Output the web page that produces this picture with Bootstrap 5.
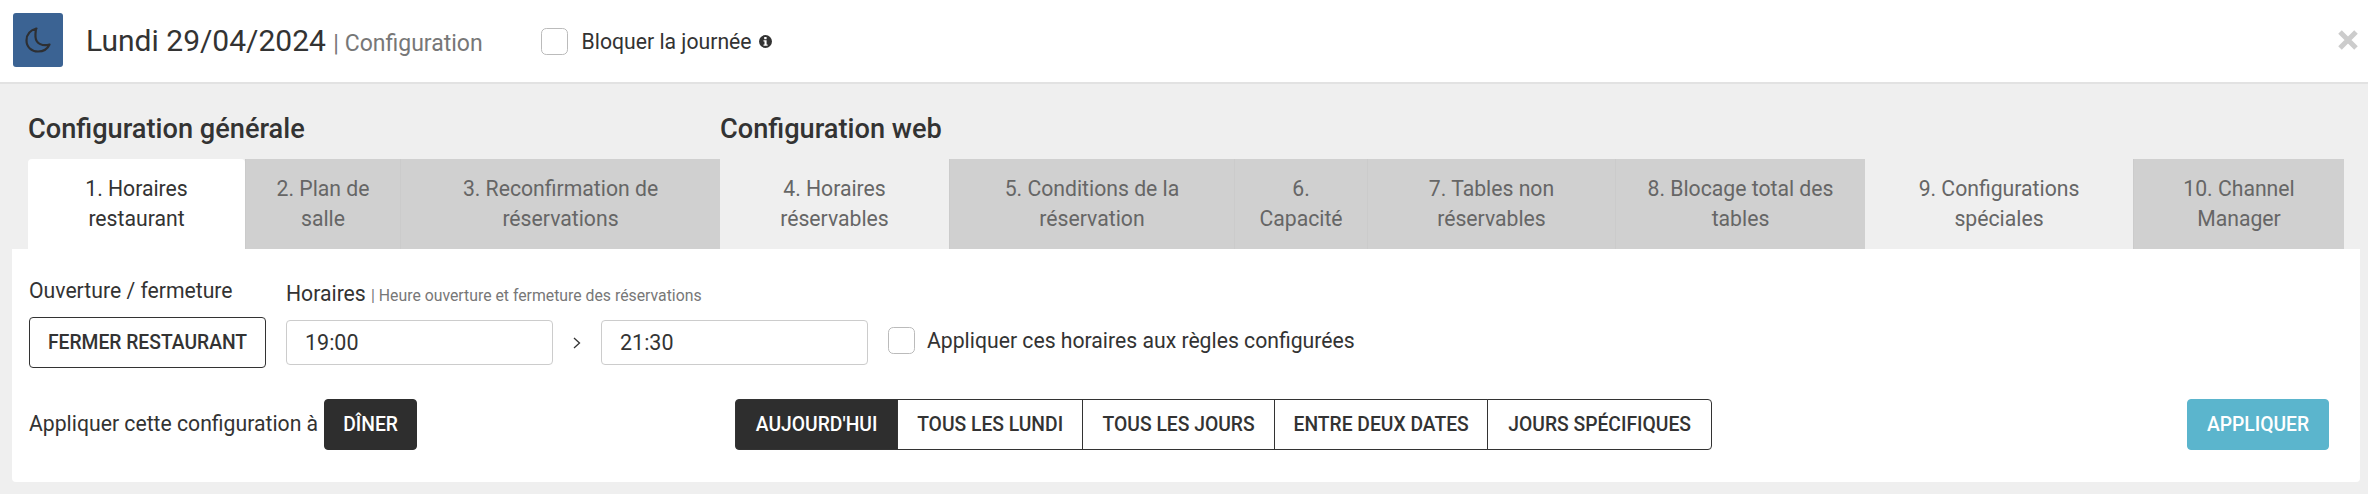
<!DOCTYPE html>
<html lang="fr">
<head>
  <meta charset="UTF-8">
  <title>Configuration</title>
  <meta name="viewport" content="width=device-width, initial-scale=1">
  <link href="https://cdn.jsdelivr.net/npm/bootstrap@5.3.0/dist/css/bootstrap.min.css" rel="stylesheet"/>
  <script src="https://cdn.jsdelivr.net/npm/bootstrap@5.3.0/dist/js/bootstrap.bundle.min.js"></script>
  <style>
    html, body { height: 494px; overflow: hidden; }
    body {
      font-family: Roboto, "Liberation Sans", sans-serif;
      background: #efefef;
      color: #333;
      font-size: 21.2px;
    }
    .top-bar {
      height: 84px;
      background: #fff;
      border-bottom: 2px solid #e2e2e2;
      padding: 0 10px 2px 13px;
    }
    .moon-box {
      width: 50px;
      height: 54px;
      background: #3b6393;
      border-radius: 3px;
      margin-right: 23px;
    }
    .day-title { font-size: 30px; font-weight: 400; margin: 2px 0 0; line-height: 1; }
    .day-sub { font-size: 23px; color: #777; }
    .check-box {
      width: 27px;
      height: 27px;
      border: 1px solid #bbb;
      border-radius: 3px;
      background: #fff;
      margin: 0;
      flex: none;
      box-shadow: none;
    }
    .block-day { margin: 4px 0 0 58px; }
    .block-day label { margin-left: 14px; }
    .info-dot { margin-left: 7px; }
    .close-x { margin-left: auto; color: #ccc; }

    .config-area { padding: 0 24px 0 28px; }
    .group-one { width: 692px; flex: none; }
    .group-two { flex: 1; }
    .group-title {
      font-size: 27.2px;
      font-weight: 500;
      line-height: 30px;
      margin: 0;
      padding: 30px 0 15px;
      color: #333;
    }
    .step-tabs { flex-wrap: nowrap; }
    .step-link {
      display: flex;
      align-items: center;
      justify-content: center;
      height: 90px;
      text-align: center;
      line-height: 30px;
      font-size: 21.2px;
      color: #666;
      background: #d0d0d0;
      border-left: 1px solid #cbcbcb;
      padding: 0;
      text-decoration: none;
    }
    .step-link.is-open { background: #fff; color: #333; border: 0; border-radius: 4px 4px 0 0; }
    .step-link.is-plain { background: #efefef; border: 0; }
    .group-one li:nth-child(1) .step-link { width: 217px; }
    .group-one li:nth-child(2) .step-link { width: 155px; }
    .group-one li:nth-child(3) .step-link { width: 320px; }
    .group-two li:nth-child(1) .step-link { width: 229px; }
    .group-two li:nth-child(2) .step-link { width: 285px; }
    .group-two li:nth-child(3) .step-link { width: 133px; }
    .group-two li:nth-child(4) .step-link { width: 248px; }
    .group-two li:nth-child(5) .step-link { width: 250px; }
    .group-two li:nth-child(6) .step-link { width: 268px; }
    .group-two li:nth-child(7) .step-link { width: 211px; }

    .main-panel {
      background: #fff;
      margin: 0 8px 0 12px;
      height: 233px;
      padding: 27px 31px 0 17px;
      border-radius: 0 0 4px 4px;
    }
    .field-row { gap: 20px; }
    .field-label { line-height: 30px; height: 41px; }
    .field-label small { font-size: 15.800px; color: #777; }
    .hours-label { padding-top: 3px; }
    .line-btn, .dark-btn, .seg-btn, .go-btn {
      font-size: 19.300px;
      font-weight: 500;
      text-transform: uppercase;
      height: 51px;
      border-radius: 4px;
      padding: 0;
      line-height: 1;
    }
    .line-btn { width: 237px; background: #fff; border: 1px solid #333; color: #333; }
    .time-input {
      width: 267px;
      height: 45px;
      font-size: 21.500px;
      color: #333;
      border: 1px solid #ccc;
      border-radius: 4px;
      padding: 0 18px;
    }
    .time-arrow { width: 48px; text-align: center; }
    .time-row { margin-top: 3px; }
    .time-arrow svg { display: block; margin: 0 auto; }
    .apply-check { margin: -3px 0 0 20px; }
    .apply-check label { margin-left: 12px; }
    .apply-row { margin-top: 31px; }
    .apply-text { margin-top: -2px; }
    .dark-btn { width: 93px; background: #2e2e2e; border: 1px solid #2e2e2e; color: #fff; margin-left: 6px; }
    .seg-group { margin-left: 318px; }
    .seg-btn { background: #fff; color: #333; border: 1px solid #333; }
    .seg-btn.is-on { background: #2e2e2e; color: #fff; }
    .seg-group .seg-btn:nth-child(1) { width: 163px; flex: none; }
    .seg-group .seg-btn:nth-child(2) { width: 186px; flex: none; }
    .seg-group .seg-btn:nth-child(3) { width: 193px; flex: none; }
    .seg-group .seg-btn:nth-child(4) { width: 214px; flex: none; }
    .seg-group .seg-btn:nth-child(5) { width: 225px; flex: none; }
    .go-btn { width: 142px; margin-left: auto; background: #5bb5cd; border: 1px solid #5bb5cd; color: #fff; }
  </style>
</head>
<body>
  <div class="top-bar d-flex align-items-center">
    <div class="moon-box d-flex align-items-center justify-content-center">
      <svg width="26" height="26" viewBox="0 0 26 26" fill="none" stroke="#2d2f33" stroke-width="2.200" stroke-linejoin="round">
        <path d="M11.500 1.500C5.500 3 1.500 7.500 1.500 13.500c0 6.500 5 11 11.500 11 5.500 0 9.500-2.500 11.500-7-6.500 2-13.500-.5-14-7.500-.2-3.500.2-6 .5-8.500z"/>
      </svg>
    </div>
    <h1 class="day-title">Lundi 29/04/2024 <span class="day-sub">| Configuration</span></h1>
    <div class="block-day d-flex align-items-center">
      <input class="form-check-input check-box" type="checkbox" id="blockDay">
      <label for="blockDay">Bloquer la journée</label>
      <svg class="info-dot" width="13" height="13" viewBox="0 0 13 13">
        <circle cx="6.500" cy="6.500" r="6.500" fill="#333"/>
        <rect x="5.200" y="2" width="2.400" height="2.200" fill="#fff"/>
        <path d="M4.500 5.300h3.100v4.200h1v1.300H4.500V9.500h1V6.600h-1z" fill="#fff"/>
      </svg>
    </div>
    <svg class="close-x" width="20" height="20" viewBox="0 0 20 20">
      <path d="M2 2l16 16M18 2L2 18" stroke="#ccc" stroke-width="5"/>
    </svg>
  </div>

  <div class="config-area d-flex">
    <section class="group-one">
      <h2 class="group-title">Configuration générale</h2>
      <ul class="nav step-tabs">
        <li class="nav-item"><a class="step-link is-open" href="#">1. Horaires<br>restaurant</a></li>
        <li class="nav-item"><a class="step-link" href="#">2. Plan de<br>salle</a></li>
        <li class="nav-item"><a class="step-link" href="#">3. Reconfirmation de<br>réservations</a></li>
      </ul>
    </section>
    <section class="group-two">
      <h2 class="group-title">Configuration web</h2>
      <ul class="nav step-tabs">
        <li class="nav-item"><a class="step-link is-plain" href="#">4. Horaires<br>réservables</a></li>
        <li class="nav-item"><a class="step-link" href="#">5. Conditions de la<br>réservation</a></li>
        <li class="nav-item"><a class="step-link" href="#">6.<br>Capacité</a></li>
        <li class="nav-item"><a class="step-link" href="#">7. Tables non<br>réservables</a></li>
        <li class="nav-item"><a class="step-link" href="#">8. Blocage total des<br>tables</a></li>
        <li class="nav-item"><a class="step-link is-plain" href="#">9. Configurations<br>spéciales</a></li>
        <li class="nav-item"><a class="step-link" href="#">10. Channel<br>Manager</a></li>
      </ul>
    </section>
  </div>

  <div class="main-panel">
    <div class="field-row d-flex">
      <div>
        <div class="field-label">Ouverture / fermeture</div>
        <button type="button" class="btn line-btn">Fermer restaurant</button>
      </div>
      <div>
        <div class="field-label hours-label">Horaires <small>| Heure ouverture et fermeture des réservations</small></div>
        <div class="time-row d-flex align-items-center">
          <input type="text" class="form-control time-input" value="19:00">
          <span class="time-arrow">
            <svg width="8" height="14" viewBox="0 0 8 14" fill="none" stroke="#333" stroke-width="1.300"><path d="M1 2l5.500 5L1 12"/></svg>
          </span>
          <input type="text" class="form-control time-input" value="21:30">
          <div class="apply-check d-flex align-items-center">
            <input class="form-check-input check-box" type="checkbox" id="applyRules">
            <label for="applyRules">Appliquer ces horaires aux règles configurées</label>
          </div>
        </div>
      </div>
    </div>
    <div class="apply-row d-flex align-items-center">
      <span class="apply-text">Appliquer cette configuration à</span>
      <button type="button" class="btn dark-btn">Dîner</button>
      <div class="btn-group seg-group" role="group">
        <button type="button" class="btn seg-btn is-on">Aujourd'hui</button>
        <button type="button" class="btn seg-btn">Tous les lundi</button>
        <button type="button" class="btn seg-btn">Tous les jours</button>
        <button type="button" class="btn seg-btn">Entre deux dates</button>
        <button type="button" class="btn seg-btn">Jours spécifiques</button>
      </div>
      <button type="button" class="btn go-btn">Appliquer</button>
    </div>
  </div>
</body>
</html>
